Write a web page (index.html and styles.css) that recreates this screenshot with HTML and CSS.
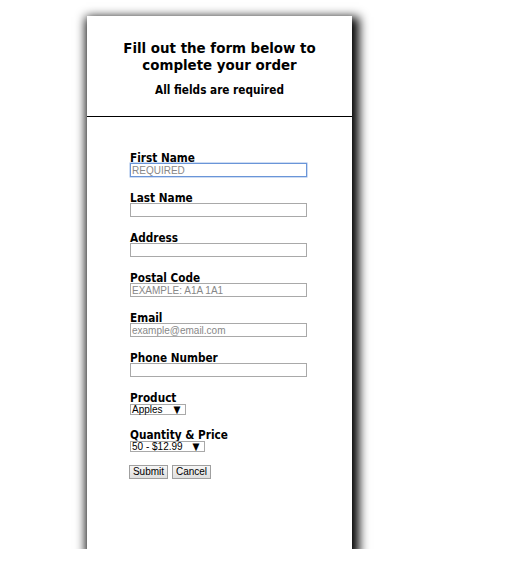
FILE: index.html
```html
<!DOCTYPE html>
<html>
<head>
<meta charset="utf-8">
<link rel="stylesheet" href="styles.css">
</head>
<body>
<div class="card">
  <div class="header">
    <h1>Fill out the form below to<br>complete your order</h1>
    <h2>All fields are required</h2>
  </div>
  <form class="form">
    <div class="field">
      <label>First Name</label>
      <input class="text focus" placeholder="REQUIRED">
    </div>
    <div class="field">
      <label>Last Name</label>
      <input class="text">
    </div>
    <div class="field">
      <label>Address</label>
      <input class="text">
    </div>
    <div class="field">
      <label>Postal Code</label>
      <input class="text" placeholder="EXAMPLE: A1A 1A1">
    </div>
    <div class="field">
      <label>Email</label>
      <input class="text" placeholder="example@email.com">
    </div>
    <div class="field">
      <label>Phone Number</label>
      <input class="text">
    </div>
    <div class="field field-short">
      <label>Product</label>
      <div class="select sel-product"><span>Apples</span><span class="arrow">▼</span></div>
    </div>
    <div class="field field-qty">
      <label>Quantity &amp; Price</label>
      <div class="select sel-qty"><span>50 - $12.99</span><span class="arrow">▼</span></div>
    </div>
    <div class="buttons">
      <button type="button" class="btn btn-submit">Submit</button>
      <button type="button" class="btn btn-cancel">Cancel</button>
    </div>
  </form>
</div>
</body>
</html>
```

FILE: styles.css
```css
html, body {
  margin: 0;
  padding: 0;
  background: #fff;
}
body {
  padding: 16px 0 0 87px;
}
.card {
  width: 265px;
  height: 533px;
  background: #fff;
  box-shadow: 3px 5px 10px 4px #000;
  box-sizing: border-box;
}
.header {
  border-bottom: 1px solid #000;
  height: 101px;
  box-sizing: border-box;
  padding-top: 24px;
  text-align: center;
  font-family: "DejaVu Sans Condensed", "DejaVu Sans", sans-serif;
  color: #000;
}
h1 {
  margin: 0;
  font-size: 14.9px;
  line-height: 17px;
  font-weight: bold;
}
h2 {
  margin: 9px 0 0;
  font-size: 11.7px;
  line-height: 15px;
  font-weight: bold;
}
.form {
  padding: 33px 0 0 43px;
  font-family: "DejaVu Sans Condensed", "DejaVu Sans", sans-serif;
}
.field {
  display: flex;
  flex-direction: column;
  align-items: flex-start;
  height: 40px;
}
.field-short { height: 37px; }
.field-qty { height: 38px; }
label {
  display: block;
  font-size: 11.7px;
  font-weight: bold;
  line-height: 11px;
  height: 11px;
  padding-top: 2.5px;
}
.text {
  width: 177px;
  height: 14px;
  box-sizing: border-box;
  border: 1px solid #a9a9a9;
  margin: -0.5px 0 0;
  padding: 0 1px;
  font-family: "Liberation Sans", Arial, sans-serif;
  font-size: 10px;
  outline: none;
  background: #fff;
}
.text::placeholder {
  color: #888;
}
.text.focus {
  border-color: #6a95d8;
  box-shadow: 0 0 0 0.5px #9bb9e8;
}
.select {
  display: flex;
  justify-content: space-between;
  align-items: center;
  height: 11px;
  box-sizing: border-box;
  border: 1px solid #a9a9a9;
  font-family: "Liberation Sans", Arial, sans-serif;
  font-size: 10px;
  line-height: 9px;
  padding: 0 4px 0 1px;
  margin-top: 0.5px;
  color: #000;
}
.sel-product { width: 56px; }
.sel-qty { width: 75px; }
.arrow {
  font-family: "DejaVu Sans", sans-serif;
  font-size: 10px;
  transform: scaleX(0.9);
}
.buttons {
  display: flex;
  gap: 4px;
  margin-left: -1px;
}
.btn {
  height: 14px;
  box-sizing: border-box;
  padding: 0;
  border: 1px solid #9f9f9f;
  background: linear-gradient(#f6f6f6, #dedede);
  font-family: "Liberation Sans", Arial, sans-serif;
  font-size: 10px;
  line-height: 12px;
  color: #000;
  margin: 0;
}
.btn-submit { width: 39px; }
.btn-cancel { width: 39px; }
```
